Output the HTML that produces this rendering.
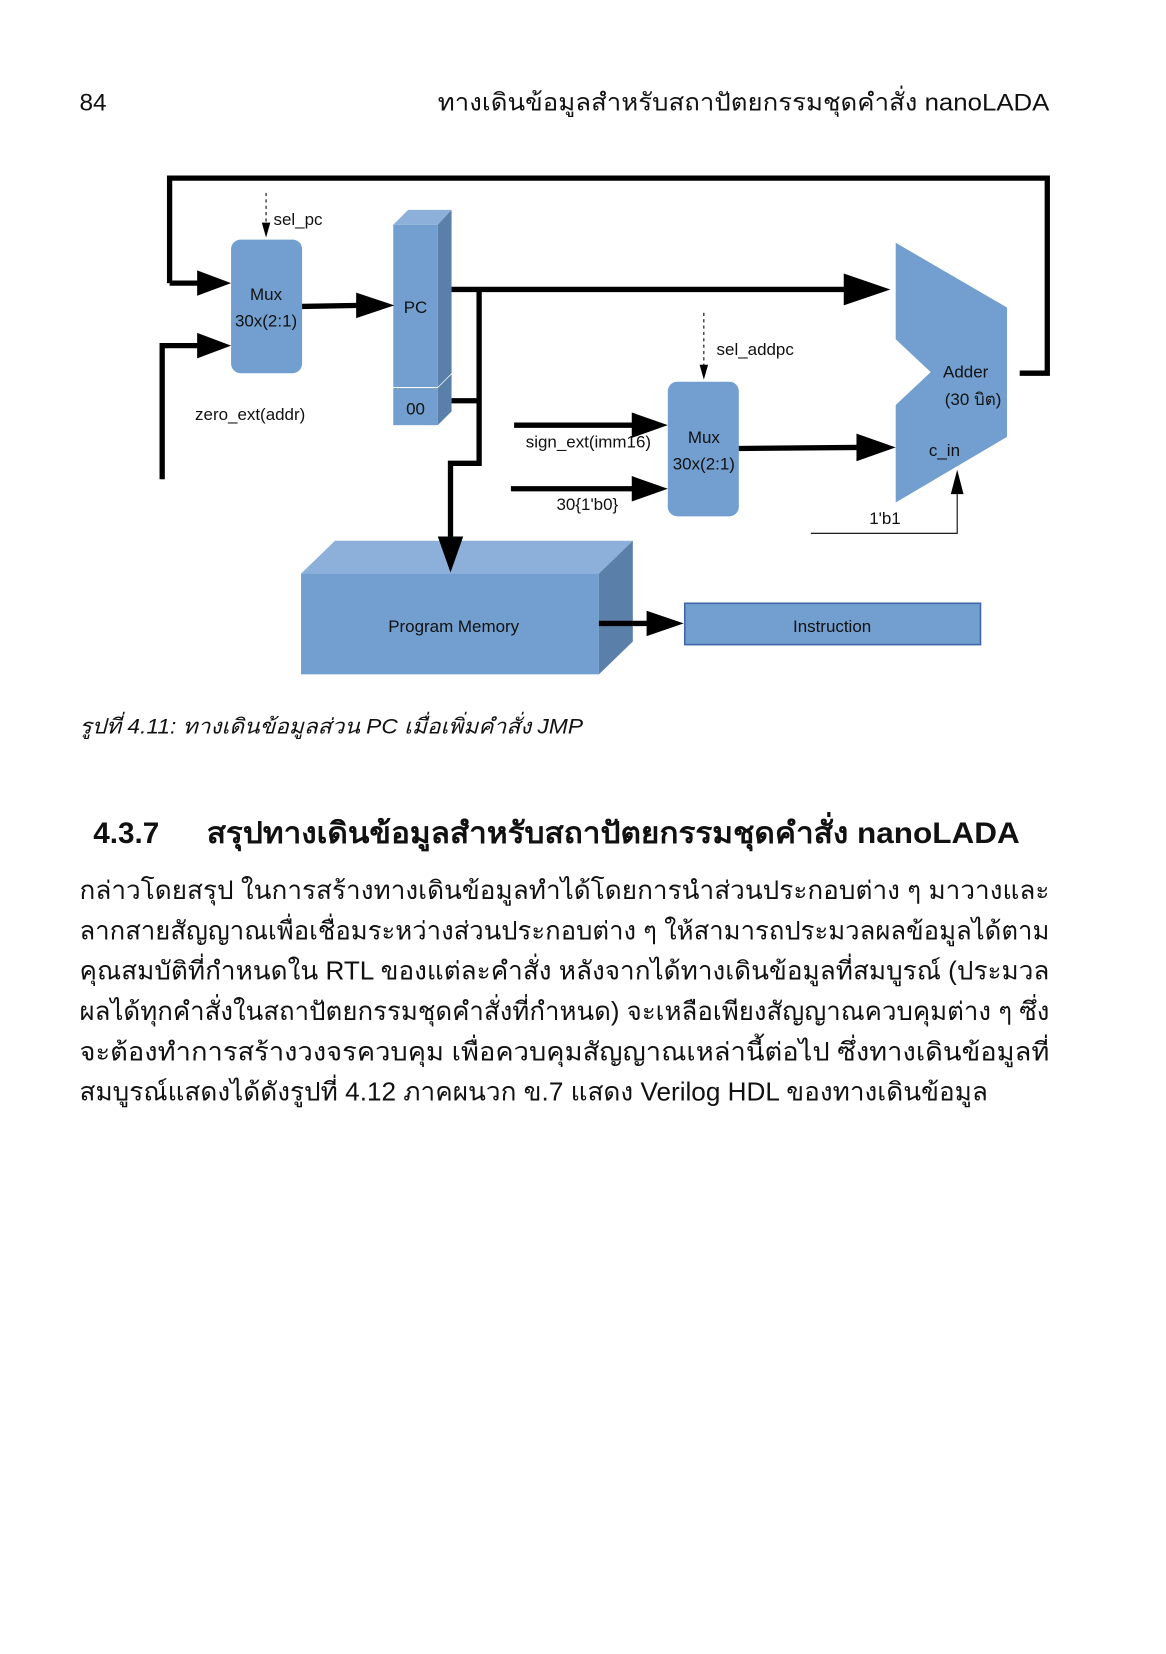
<!DOCTYPE html>
<html><head><meta charset="utf-8"><style>
html,body{margin:0;padding:0;background:#fff}
svg{display:block}
text{font-family:"Liberation Sans","DejaVu Sans",sans-serif;fill:#111}
</style></head><body>
<svg width="1166" height="1654" viewBox="0 0 1100 1560" preserveAspectRatio="none" xmlns="http://www.w3.org/2000/svg">
<text x="75" y="104" font-size="23">84</text>
<text x="990" y="104" font-size="23" text-anchor="end" textLength="577" lengthAdjust="spacingAndGlyphs">ทางเดินข้อมูลสำหรับสถาปัตยกรรมชุดคำสั่ง nanoLADA</text>

<rect x="218" y="226" width="67" height="126" rx="9" fill="#729fcf"/>
<rect x="630" y="360" width="67" height="127" rx="9" fill="#729fcf"/>
<polygon points="371,212 385,198 426,198 413,212" fill="#8cb0da"/>
<rect x="371" y="212" width="42" height="153" fill="#729fcf"/>
<polygon points="413,212 426,198 426,352 413,365" fill="#5a7fa8"/>
<rect x="371" y="366" width="42" height="35" fill="#729fcf"/>
<polygon points="413,366 426,353 426,388 413,401" fill="#5a7fa8"/>
<polygon points="845,229 950,290 950,412 845,474 845,382 878,351 845,320" fill="#729fcf"/>
<polygon points="284,541 316,510 597,510 565,541" fill="#8cb0da"/>
<rect x="284" y="541" width="281" height="95" fill="#729fcf"/>
<polygon points="565,541 597,510 597,605 565,636" fill="#5a7fa8"/>
<rect x="646" y="569" width="279" height="39" fill="#729fcf" stroke="#3e66a8" stroke-width="1.5"/>

<g fill="none" stroke="#000" stroke-width="5">
<polyline points="160,267 160,168 988,168 988,352 962,352"/>
<line x1="160" y1="267" x2="190" y2="267"/>
<polyline points="153,452 153,326 190,326"/>
<line x1="285" y1="289" x2="340" y2="288"/>
<line x1="426" y1="273" x2="800" y2="273"/>
<polyline points="452,273 452,437 425,437 425,510"/>
<line x1="426" y1="378" x2="452" y2="378"/>
<line x1="485" y1="401" x2="600" y2="401"/>
<line x1="482" y1="461" x2="600" y2="461"/>
<line x1="697" y1="423" x2="810" y2="422"/>
<line x1="565" y1="588" x2="612" y2="588"/>
</g>
<g fill="#000">
<polygon points="186,255 218,267 186,279"/>
<polygon points="186,314 218,326 186,338"/>
<polygon points="336,276 372,288 336,300"/>
<polygon points="796,258 840,273 796,288"/>
<polygon points="413,506 437,506 425,540"/>
<polygon points="596,389 630,401 596,413"/>
<polygon points="596,449 630,461 596,473"/>
<polygon points="808,409 845,422 808,435"/>
<polygon points="610,576 645,588 610,600"/>
<polygon points="897,466 903,443 909,466"/>
<polygon points="247,210 251,224 255,210"/>
<polygon points="660,344 664,358 668,344"/>
</g>
<g stroke="#000" stroke-width="1" fill="none">
<line x1="251" y1="182" x2="251" y2="212" stroke-dasharray="3,3"/>
<line x1="664" y1="295" x2="664" y2="346" stroke-dasharray="3,3"/>
<polyline points="765,503 903,503 903,462"/>
</g>

<g font-size="16">
<text x="251" y="283" text-anchor="middle">Mux</text>
<text x="251" y="308" text-anchor="middle">30x(2:1)</text>
<text x="258" y="212">sel_pc</text>
<text x="184" y="396">zero_ext(addr)</text>
<text x="392" y="295" text-anchor="middle">PC</text>
<text x="392" y="391" text-anchor="middle">00</text>
<text x="676" y="335">sel_addpc</text>
<text x="664" y="418" text-anchor="middle">Mux</text>
<text x="664" y="443" text-anchor="middle">30x(2:1)</text>
<text x="496" y="422">sign_ext(imm16)</text>
<text x="525" y="481">30{1'b0}</text>
<text x="911" y="356" text-anchor="middle">Adder</text>
<text x="918" y="382" text-anchor="middle">(30 บิต)</text>
<text x="891" y="430" text-anchor="middle">c_in</text>
<text x="820" y="494">1'b1</text>
<text x="428" y="596" text-anchor="middle">Program Memory</text>
<text x="785" y="596" text-anchor="middle">Instruction</text>
</g>

<text x="75" y="692" font-size="20" font-style="italic" textLength="475" lengthAdjust="spacingAndGlyphs">รูปที่ 4.11: ทางเดินข้อมูลส่วน PC เมื่อเพิ่มคำสั่ง JMP</text>
<text x="88" y="795" font-size="28" font-weight="bold">4.3.7</text>
<text x="195" y="795" font-size="28" font-weight="bold" textLength="767" lengthAdjust="spacingAndGlyphs">สรุปทางเดินข้อมูลสำหรับสถาปัตยกรรมชุดคำสั่ง nanoLADA</text>
<g font-size="24">
<text x="75" y="848" textLength="915" lengthAdjust="spacingAndGlyphs">กล่าวโดยสรุป ในการสร้างทางเดินข้อมูลทำได้โดยการนำส่วนประกอบต่าง ๆ มาวางและ</text>
<text x="75" y="886" textLength="915" lengthAdjust="spacingAndGlyphs">ลากสายสัญญาณเพื่อเชื่อมระหว่างส่วนประกอบต่าง ๆ ให้สามารถประมวลผลข้อมูลได้ตาม</text>
<text x="75" y="924" textLength="915" lengthAdjust="spacingAndGlyphs">คุณสมบัติที่กำหนดใน RTL ของแต่ละคำสั่ง หลังจากได้ทางเดินข้อมูลที่สมบูรณ์ (ประมวล</text>
<text x="75" y="962" textLength="915" lengthAdjust="spacingAndGlyphs">ผลได้ทุกคำสั่งในสถาปัตยกรรมชุดคำสั่งที่กำหนด) จะเหลือเพียงสัญญาณควบคุมต่าง ๆ ซึ่ง</text>
<text x="75" y="1000" textLength="915" lengthAdjust="spacingAndGlyphs">จะต้องทำการสร้างวงจรควบคุม เพื่อควบคุมสัญญาณเหล่านี้ต่อไป ซึ่งทางเดินข้อมูลที่</text>
<text x="75" y="1038" textLength="857" lengthAdjust="spacingAndGlyphs">สมบูรณ์แสดงได้ดังรูปที่ 4.12 ภาคผนวก ข.7 แสดง Verilog HDL ของทางเดินข้อมูล</text>
</g>
</svg>
</body></html>
